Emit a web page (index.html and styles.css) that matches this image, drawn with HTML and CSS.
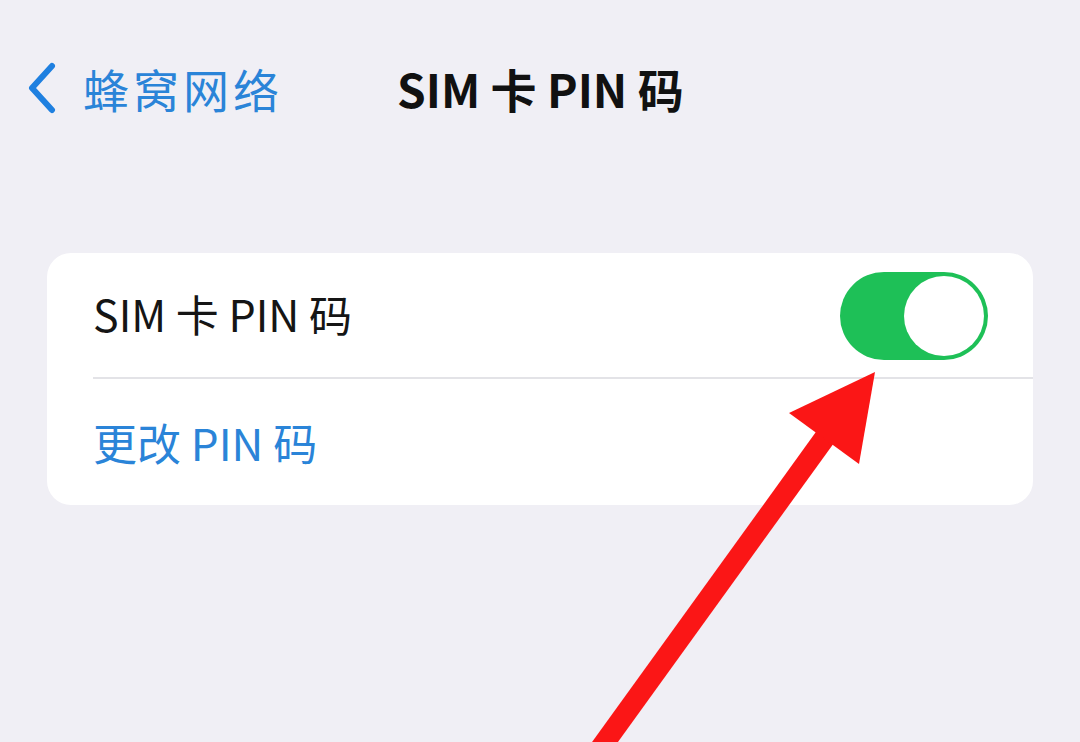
FILE: index.html
```html
<!DOCTYPE html>
<html lang="zh-CN">
<head>
<meta charset="utf-8">
<title>SIM 卡 PIN 码</title>
<link rel="stylesheet" href="styles.css">
</head>
<body>
<div class="screen">
  <header class="navbar">
    <a class="back" href="#">
      <svg class="chevron" viewBox="0 0 32 52" width="32" height="52" aria-hidden="true">
        <path d="M26 4 L6 26 L26 48" fill="none" stroke="currentColor" stroke-width="6" stroke-linecap="round" stroke-linejoin="round"/>
      </svg>
      <span class="back-label">蜂窝网络</span>
    </a>
    <h1 class="title">SIM 卡 PIN 码</h1>
  </header>

  <section class="group">
    <div class="row">
      <span class="row-label">SIM 卡 PIN 码</span>
      <span class="switch on"><span class="knob"></span></span>
    </div>
    <div class="row link-row">
      <span class="row-link">更改 PIN 码</span>
    </div>
  </section>

  <svg class="pointer" viewBox="0 0 1080 742" width="1080" height="742" aria-hidden="true">
    <line x1="592" y1="760" x2="826" y2="436" stroke="#fb1616" stroke-width="21"/>
    <polygon points="875,372 789,413 859,464" fill="#fb1616"/>
  </svg>
</div>
</body>
</html>
```
FILE: styles.css
```css
html, body {
  margin: 0;
  padding: 0;
}

body {
  background: #f0eff5;
  font-family: "Noto Sans CJK SC", "Noto Sans", sans-serif;
  color: #111;
}

.screen {
  position: relative;
  width: 1080px;
  height: 742px;
  overflow: hidden;
}

.navbar {
  display: flex;
  align-items: center;
  height: 100px;
  padding: 38px 0 0 26px;
  box-sizing: content-box;
}

.back {
  display: flex;
  align-items: center;
  gap: 25px;
  color: #2a84d8;
  text-decoration: none;
}

.chevron {
  color: #1f80e0;
}

.back-label {
  font-size: 46px;
  letter-spacing: 4px;
  line-height: 1;
}

.title {
  margin: 0 0 0 114px;
  font-size: 46px;
  font-weight: 700;
  line-height: 1;
  letter-spacing: 0;
  color: #111;
}

.group {
  margin: 115px 47px 0 47px;
  background: #fff;
  border-radius: 24px;
  padding-left: 46px;
}

.row {
  display: flex;
  align-items: center;
  justify-content: space-between;
  height: 124px;
  padding-right: 45px;
  border-bottom: 2px solid #e3e3e7;
}

.link-row {
  height: 126px;
  border-bottom: none;
}

.row-label {
  font-size: 43px;
  line-height: 1;
  color: #151515;
  position: relative;
  top: -2px;
}

.row-link {
  font-size: 44px;
  line-height: 1;
  color: #2a84d8;
  position: relative;
  top: 0;
}

.switch {
  display: flex;
  justify-content: flex-end;
  align-items: center;
  width: 148px;
  height: 88px;
  box-sizing: border-box;
  border-radius: 44px;
  background: #1ec057;
  padding: 4px;
  position: relative;
  top: 1px;
}

.knob {
  width: 80px;
  height: 80px;
  border-radius: 50%;
  background: #fff;
}

.pointer {
  position: absolute;
  left: 0;
  top: 0;
  pointer-events: none;
}
```
